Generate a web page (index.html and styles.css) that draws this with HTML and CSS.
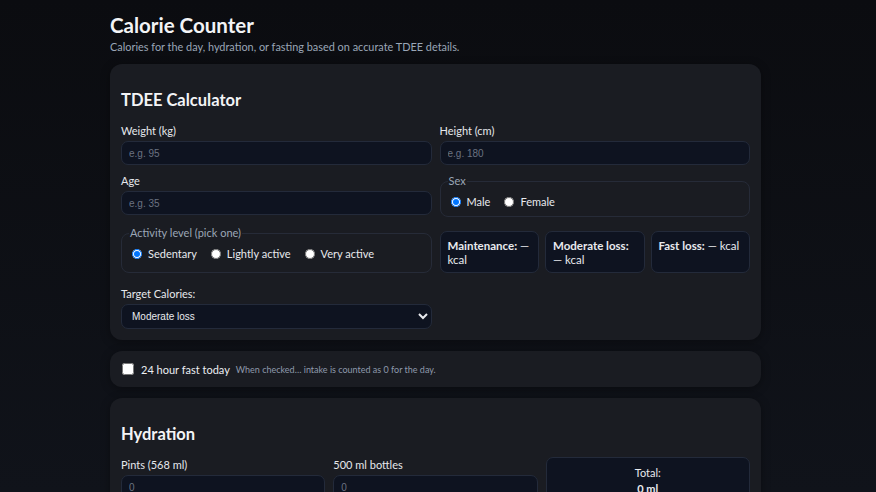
FILE: index.html
```html
<!DOCTYPE html>
<html lang="en">
<head>
<meta charset="utf-8">
<title>Calorie Counter</title>
<link rel="stylesheet" href="styles.css">
</head>
<body>
<main class="wrap">
  <header class="head">
    <h1>Calorie Counter</h1>
    <p class="sub">Calories for the day, hydration, or fasting based on accurate TDEE details.</p>
  </header>

  <section class="card">
    <h2>TDEE Calculator</h2>
    <div class="grid2">
      <div class="field">
        <label class="lbl" for="w">Weight (kg)</label>
        <input class="inp" id="w" type="number" placeholder="e.g. 95">
      </div>
      <div class="field">
        <label class="lbl" for="h">Height (cm)</label>
        <input class="inp" id="h" type="number" placeholder="e.g. 180">
      </div>
      <div class="field">
        <label class="lbl" for="a">Age</label>
        <input class="inp" id="a" type="number" placeholder="e.g. 35">
      </div>
      <fieldset class="fs">
        <legend>Sex</legend>
        <div class="radios">
          <label class="opt"><input type="radio" name="sex" checked> Male</label>
          <label class="opt"><input type="radio" name="sex"> Female</label>
        </div>
      </fieldset>
      <fieldset class="fs">
        <legend>Activity level (pick one)</legend>
        <div class="radios">
          <label class="opt"><input type="radio" name="act" checked> Sedentary</label>
          <label class="opt"><input type="radio" name="act"> Lightly active</label>
          <label class="opt"><input type="radio" name="act"> Very active</label>
        </div>
      </fieldset>
      <div class="results">
        <div class="res"><b>Maintenance:</b> — kcal</div>
        <div class="res"><b>Moderate loss:</b> — kcal</div>
        <div class="res"><b>Fast loss:</b> — kcal</div>
      </div>
    </div>
    <div class="grid2 target">
      <div class="field">
        <label class="lbl" for="t">Target Calories:</label>
        <select class="sel" id="t">
          <option>Maintenance</option>
          <option selected>Moderate loss</option>
          <option>Fast loss</option>
        </select>
      </div>
    </div>
  </section>

  <section class="card fast">
    <label class="fastlbl"><input type="checkbox"> 24 hour fast today</label>
    <span class="note">When checked… intake is counted as 0 for the day.</span>
  </section>

  <section class="card">
    <h2>Hydration</h2>
    <div class="grid3">
      <div class="field">
        <label class="lbl" for="p">Pints (568 ml)</label>
        <input class="inp" id="p" type="number" placeholder="0">
      </div>
      <div class="field">
        <label class="lbl" for="b">500 ml bottles</label>
        <input class="inp" id="b" type="number" placeholder="0">
      </div>
      <div class="total">
        <div>Total:</div>
        <div class="tv">0 ml</div>
      </div>
    </div>
  </section>
</main>
</body>
</html>
```

FILE: styles.css
```css
* { box-sizing: border-box; }
html, body { height: 100%; }
body {
  margin: 0;
  background: linear-gradient(180deg, #0b0c10 0%, #10131a 100%);
  background-attachment: fixed;
  color: #e8eaee;
  font-family: Lato, "Noto Sans", sans-serif;
  font-size: 11px;
  overflow: hidden;
}
.wrap {
  width: 651px;
  margin: 0 0 0 110px;
  padding-top: 12px;
}
.head h1 {
  margin: 0;
  font-size: 20.5px;
  line-height: 26px;
  font-weight: 700;
  color: #f3f4f6;
}
.head .sub {
  margin: 1px 0 9px;
  font-size: 10.9px;
  line-height: 16px;
  color: #9aa6b6;
}
.card {
  background: #1a1c22;
  border-radius: 12px;
  padding: 11px;
  margin-bottom: 11px;
  box-shadow: 0 2px 10px rgba(0,0,0,0.35);
}
.card h2 {
  margin: 15px 0 13px;
  font-size: 16.5px;
  line-height: 20px;
  font-weight: 700;
  color: #f3f4f6;
}
.grid2 {
  display: grid;
  grid-template-columns: 1fr 1fr;
  column-gap: 8px;
  row-gap: 8px;
}
.grid3 {
  display: grid;
  grid-template-columns: 1fr 1fr 1fr;
  column-gap: 8px;
}
.field {
  display: flex;
  flex-direction: column;
  gap: 2px;
}
.lbl {
  font-size: 11px;
  line-height: 16px;
  color: #e6e8ec;
}
.inp, .sel {
  height: 24px;
  background: #0e1320;
  border: 1px solid #232a3a;
  border-radius: 7px;
  color: #e8eaee;
  font-family: "Liberation Sans", Arial, sans-serif;
  font-size: 10px;
  padding: 0 7px;
  outline: none;
  -moz-appearance: textfield;
}
.inp::-webkit-outer-spin-button,
.inp::-webkit-inner-spin-button { -webkit-appearance: none; margin: 0; }
.inp::placeholder { color: #6b7280; }
.sel {
  height: 25px;
  padding: 0 4px 0 6px;
  color-scheme: dark;
  font-size: 10px;
}
.fs {
  margin: 0;
  border: 1px solid #262b38;
  border-radius: 8px;
  padding: 0 8px 6px 10px;
  min-width: 0;
}
.fs legend {
  padding: 0 1px;
  margin-left: -3px;
  font-size: 11px;
  line-height: 16px;
  color: #9aa6b6;
}
.radios {
  display: flex;
  gap: 14px;
  align-items: center;
  padding-top: 5px;
}
.opt {
  display: flex;
  align-items: center;
  gap: 6px;
  font-size: 11px;
  line-height: 16px;
  color: #e8eaee;
}
.opt input {
  margin: 0;
  width: 10px;
  height: 10px;
}
.results {
  display: grid;
  grid-template-columns: 1fr 1fr 1fr;
  gap: 6px;
  margin-top: 6px;
  align-self: start;
}
.res {
  background: #0e1320;
  border: 1px solid #232a3a;
  border-radius: 7px;
  padding: 7px 7px 6px;
  font-size: 11.5px;
  line-height: 14px;
  height: 42px;
  color: #e8eaee;
}
.target { margin-top: 13px; }
.fast {
  display: flex;
  align-items: center;
  padding: 11px 12px;
  height: 36px;
}
.fastlbl {
  display: flex;
  align-items: center;
  gap: 7px;
  font-size: 11px;
  color: #eceef2;
}
.fastlbl input { margin: 0; width: 12px; height: 12px; }
.note {
  margin-left: 6px;
  font-size: 9px;
  color: #8e9aac;
}
.total {
  background: #0e1320;
  border: 1px solid #232a3a;
  border-radius: 7px;
  text-align: center;
  padding: 7px;
  font-size: 11px;
  line-height: 16px;
  height: 80px;
}
.tv { font-weight: 700; }
```
